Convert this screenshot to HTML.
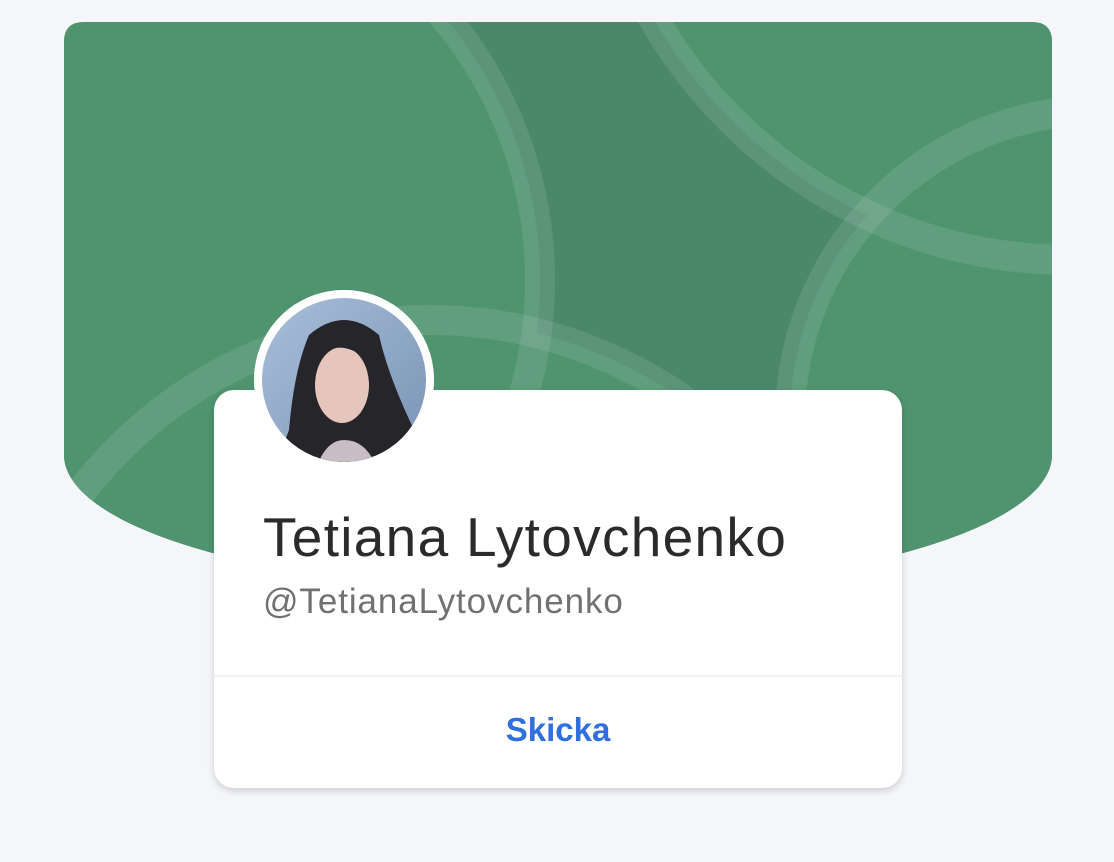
<!DOCTYPE html>
<html><head><meta charset="utf-8"><style>
html,body{margin:0;padding:0;width:1114px;height:862px;background:#f5f6fa;overflow:hidden;font-family:"Liberation Sans",sans-serif}
svg.bg{position:absolute;left:0;top:0}
.card{position:absolute;left:214px;top:390px;width:688px;height:398px;background:#fff;border-radius:20px;box-shadow:0 3px 8px rgba(0,0,0,.16)}
.name{position:absolute;left:49px;top:115px;font-size:55px;line-height:64px;color:#2b2b2b;letter-spacing:1.3px;white-space:nowrap}
.handle{position:absolute;left:49px;top:191px;font-size:35px;line-height:42px;color:#6f7271;letter-spacing:0.9px;white-space:nowrap}
.div{position:absolute;left:0;right:0;top:285px;height:2px;background:#f2f3f5}
.btn{position:absolute;left:0;right:0;top:321px;text-align:center;font-size:33px;font-weight:bold;color:#2f6fe0}
.av{position:absolute;left:254px;top:290px;width:180px;height:180px;border-radius:50%;background:#fff}
</style></head><body>
<svg class="bg" width="1114" height="862">
<defs><clipPath id="c"><path d="M64,42 Q64,22 84,22 H1032 Q1052,22 1052,42 V455 A494,137 0 0 1 64,455 Z"/></clipPath></defs>
<g clip-path="url(#c)">
<rect x="0" y="0" width="1114" height="862" fill="#4a8869"/>
<circle cx="130" cy="280" r="410" fill="#4f946f"/>
<circle cx="1070" cy="-220" r="480" fill="#4f946f"/>
<circle cx="1100" cy="420" r="310" fill="#4f946f"/>
<circle cx="430" cy="760" r="440" fill="#4f946f"/>
<g fill="none" stroke="rgba(255,255,255,0.1)" stroke-width="30">
<circle cx="130" cy="280" r="410"/>
<circle cx="1070" cy="-220" r="480"/>
<circle cx="1100" cy="420" r="310"/>
<circle cx="430" cy="760" r="440"/>
</g></g></svg>
<div class="card">
<div class="name">Tetiana Lytovchenko</div>
<div class="handle">@TetianaLytovchenko</div>
<div class="div"></div>
<div class="btn">Skicka</div>
</div>
<div class="av"><svg width="180" height="180" style="position:absolute;left:0;top:0">
<defs><clipPath id="a2"><circle cx="90" cy="90" r="82"/></clipPath>
<linearGradient id="g2" x1="0" y1="0" x2="1" y2="1"><stop offset="0" stop-color="#a9c1dc"/><stop offset="1" stop-color="#7891b3"/></linearGradient></defs>
<circle cx="90" cy="90" r="90" fill="#fff"/>
<g clip-path="url(#a2)">
<rect width="180" height="180" fill="url(#g2)"/>
<path d="M55,45 Q90,15 125,45 Q135,90 165,150 L160,180 L20,180 L35,140 Q40,80 55,45Z" fill="#25252a"/>
<path d="M60,185 Q70,150 90,150 Q115,150 125,185Z" fill="#c9bcc4"/>
<ellipse cx="88" cy="95" rx="27" ry="38" fill="#e6c6bc"/>
<path d="M58,70 Q70,40 95,45 Q118,50 118,75 Q100,55 80,58 Q65,62 60,80Z" fill="#25252a"/>
</g></svg></div>
</body></html>
